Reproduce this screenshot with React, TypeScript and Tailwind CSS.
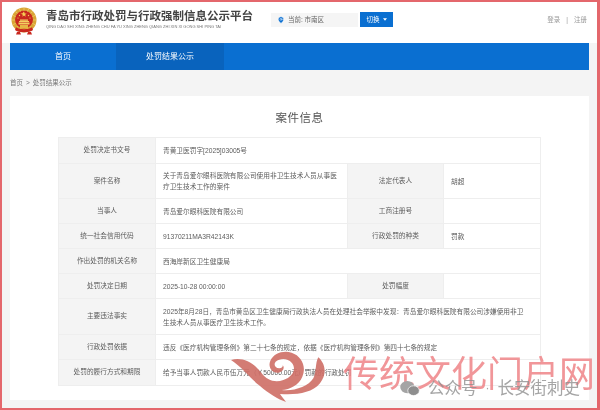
import { MapPin } from 'lucide-react';

const cjk = "font-['Liberation_Sans','Noto_Sans_CJK_SC',sans-serif]";

function Emblem() {
  const rays = Array.from({ length: 16 }, (_, i) => (i * 360) / 16);
  return (
    <svg viewBox="0 0 26 28" className="w-[26px] h-[28px] shrink-0">
      <circle cx="13" cy="13" r="12.5" fill="#d9a536" />
      <circle cx="13" cy="12.5" r="9" fill="#c9281f" />
      {rays.map((r) => (
        <rect key={r} x="12.7" y="1" width="0.6" height="3" fill="#f5d774" transform={`rotate(${r} 13 13)`} />
      ))}
      <path d="M13 4.5l.7 2h2l-1.6 1.2.6 2-1.7-1.2-1.7 1.2.6-2L9.3 6.5h2z" fill="#f6cf55" />
      <circle cx="8.5" cy="8.5" r="0.7" fill="#f6cf55" />
      <circle cx="17.5" cy="8.5" r="0.7" fill="#f6cf55" />
      <circle cx="7" cy="11" r="0.6" fill="#f6cf55" />
      <circle cx="19" cy="11" r="0.6" fill="#f6cf55" />
      <path d="M8 14h10v1H8zM9 12.5h8v1.2H9zM7.5 15.5h11v2h-11z" fill="#f3cf61" />
      <path d="M5 20c3 3 13 3 16 0l1 3c-3 3-15 3-18 0z" fill="#c9281f" />
      <path d="M9 18h8v3.5H9z" fill="#e6b545" />
      <path d="M6 25h3l1 2.5H5zM17 25h3l1 2.5h-5z" fill="#c9281f" />
    </svg>
  );
}

function Swirl() {
  return (
    <svg viewBox="0 0 330 180" className="w-[110px] h-[60px] opacity-90">
      <path
        d="M18 30C50 20 85 35 110 70c15 20 40 30 65 20 30-10 40-35 25-52-12-14-35-14-48-3-7 7-2 20 11 20 7 0 11-5 10-9 7 6 2 20-13 22-20 2-32-18-24-36 10-22 39-32 64-24 30 10 45 42 32 72-10 25-37 38-62 40 35 5 80-10 95-35 10-20 5-45 15-63 20 18 28 48 5 78-25 30-70 35-120 32 5 8 13 16 18 24-23-8-53-26-78-48C75 85 50 50 18 30z"
        fill="#cf6e66"
      />
    </svg>
  );
}

function Th({ children }: { children?: React.ReactNode }) {
  return (
    <th className="bg-[#f4f4f4] border border-[#eeeeee] font-normal text-center text-[#5c5c5c] px-1">
      {children}
    </th>
  );
}

function Td({ children, colSpan }: { children?: React.ReactNode; colSpan?: number }) {
  return (
    <td colSpan={colSpan} className="border border-[#eeeeee] px-[7px] text-[#5c5c5c] leading-[11px]">
      {children}
    </td>
  );
}

export default function App() {
  return (
    <div className={`${cjk} relative w-[600px] h-[410px] overflow-hidden bg-[#f4f4f4] border-2 border-r-[3px] border-[#e4676c] blur-[0.3px]`}>
      <header className="h-[41px] bg-white flex items-start pl-[9px] pr-[10px]">
        <div className="mt-[5px]"><Emblem /></div>
        <div className="ml-[9px] mt-[6px] w-[220px]">
          <p className="text-[11.5px] leading-[16px] font-bold text-[#444444] whitespace-nowrap">青岛市行政处罚与行政强制信息公示平台</p>
          <p className="text-[4px] leading-[6px] text-[#777777] whitespace-nowrap">QING DAO SHI XING ZHENG CHU FA YU XING ZHENG QIANG ZHI XIN XI GONG SHI PING TAI</p>
        </div>
        <div className="ml-[5px] mt-[10px] flex items-center">
          <div className="w-[87px] h-[14px] bg-[#f5f5f5] flex items-center pl-[6px] gap-[3px] text-[6.5px] text-[#666666]">
            <MapPin size={8} fill="#0a6fd1" stroke="#ffffff" strokeWidth={1.5} />
            <span>当前: 市南区</span>
          </div>
          <button className="ml-[2px] w-[33px] h-[15px] bg-[#0a6fd1] text-white text-[6.5px] flex items-center justify-center gap-[3px]">
            切换
            <svg viewBox="0 0 6 4" className="w-[4px] h-[3px]"><path d="M0 0h6L3 4z" fill="#ffffff" /></svg>
          </button>
        </div>
        <div className="ml-auto mt-[13px] flex items-center gap-[6px] text-[6.5px] text-[#999999]">
          <span>登录</span><span>|</span><span>注册</span>
        </div>
      </header>

      <nav className="mx-[8px] h-[27px] bg-[#0a6fd1] flex text-white text-[8px]">
        <a className="w-[106px] flex items-center justify-center">首页</a>
        <a className="w-[108px] flex items-center justify-center bg-[#0963bd]">处罚结果公示</a>
      </nav>

      <div className="h-[26px] pl-[8px] flex items-center text-[6.5px] text-[#777777] gap-[3px]">
        <span>首页</span><span>&gt;</span><span>处罚结果公示</span>
      </div>

      <main className="mx-[8px] h-[304px] bg-white pt-[14px]">
        <h1 className="text-center text-[11.5px] leading-[16px] text-[#555555] tracking-[0.5px] mb-[11px]">案件信息</h1>
        <table className="ml-[48px] w-[482px] table-fixed border-collapse text-[6.7px]">
          <colgroup>
            <col className="w-[97px]" />
            <col className="w-[192px]" />
            <col className="w-[96px]" />
            <col className="w-[97px]" />
          </colgroup>
          <tbody>
            <tr className="h-[26px]"><Th>处罚决定书文号</Th><Td colSpan={3}>青黄卫医罚字[2025]03005号</Td></tr>
            <tr className="h-[35px]"><Th>案件名称</Th><Td>关于青岛爱尔眼科医院有限公司使用非卫生技术人员从事医疗卫生技术工作的案件</Td><Th>法定代表人</Th><Td>胡超</Td></tr>
            <tr className="h-[25px]"><Th>当事人</Th><Td>青岛爱尔眼科医院有限公司</Td><Th>工商注册号</Th><Td /></tr>
            <tr className="h-[25px]"><Th>统一社会信用代码</Th><Td>91370211MA3R42143K</Td><Th>行政处罚的种类</Th><Td>罚款</Td></tr>
            <tr className="h-[25px]"><Th>作出处罚的机关名称</Th><Td colSpan={3}>西海岸新区卫生健康局</Td></tr>
            <tr className="h-[25px]"><Th>处罚决定日期</Th><Td>2025-10-28 00:00:00</Td><Th>处罚幅度</Th><Td /></tr>
            <tr className="h-[36px]"><Th>主要违法事实</Th><Td colSpan={3}>2025年8月28日，青岛市黄岛区卫生健康局行政执法人员在处理社会举报中发现：青岛爱尔眼科医院有限公司涉嫌使用非卫<br />生技术人员从事医疗卫生技术工作。</Td></tr>
            <tr className="h-[25px]"><Th>行政处罚依据</Th><Td colSpan={3}>违反《医疗机构管理条例》第二十七条的规定，依据《医疗机构管理条例》第四十七条的规定</Td></tr>
            <tr className="h-[26px]"><Th>处罚的履行方式和期限</Th><Td colSpan={3}>给予当事人罚款人民币伍万元（￥50000.00元）罚款的行政处罚</Td></tr>
          </tbody>
        </table>
      </main>

      {/* watermark over the page */}
      <div className="absolute left-[223px] top-[348px]"><Swirl /></div>
      <div className="absolute left-[341px] top-[349px] text-[36px] leading-[48px] text-[#ee8487]/85 whitespace-nowrap">传统文化门户网</div>
      <div className="absolute left-[398px] top-[376px] flex items-center text-[16.5px] leading-[20px] text-[#8f8f8f]/80 whitespace-nowrap">
        <svg viewBox="0 0 22 18" className="w-[20px] h-[16px] mr-[8px]">
          <ellipse cx="8" cy="8" rx="8" ry="7" fill="#a4a4a4" />
          <ellipse cx="15" cy="12" rx="6.5" ry="5.5" fill="#8e8e8e" stroke="#ffffff" strokeWidth="0.8" />
        </svg>
        <span>公众号</span>
        <span className="mx-[8px] text-[12px]">·</span>
        <span>长安街刺史</span>
      </div>
    </div>
  );
}
